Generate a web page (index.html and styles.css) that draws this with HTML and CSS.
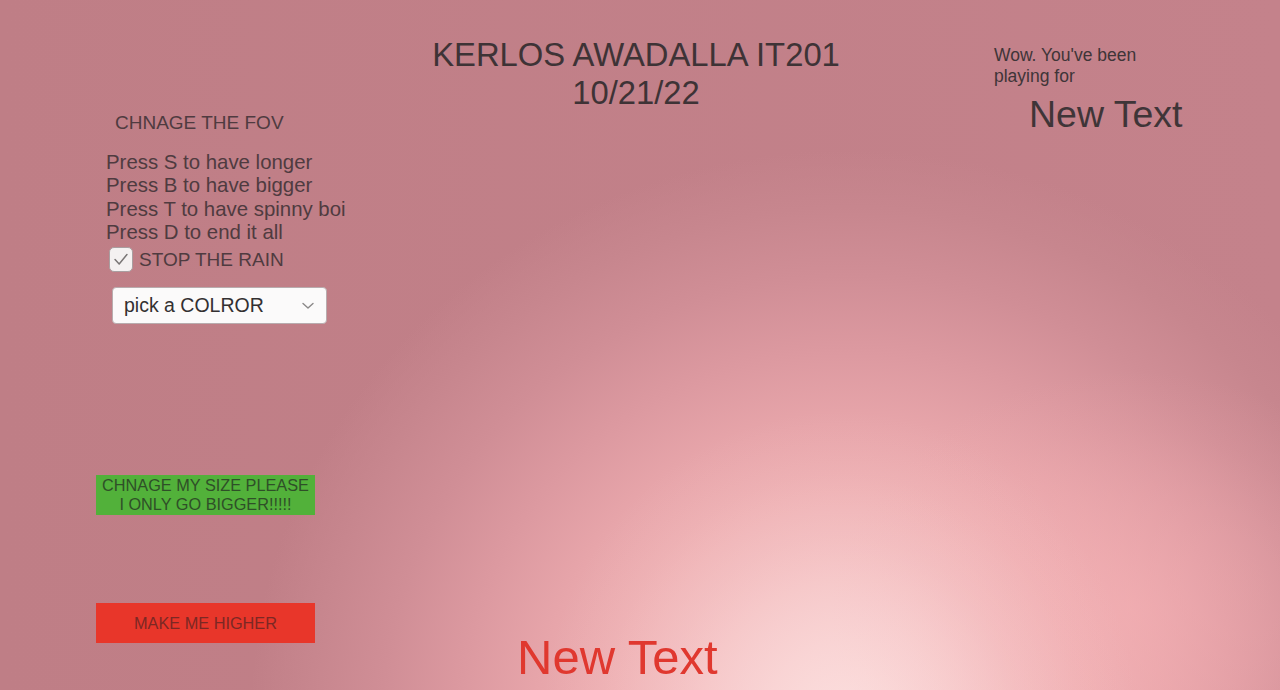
FILE: index.html
```html
<!DOCTYPE html>
<html lang="en">
<head>
<meta charset="utf-8">
<title>KERLOS AWADALLA IT201</title>
<link rel="stylesheet" href="styles.css">
</head>
<body>
<div class="screen">
  <aside class="left">
    <div class="fov">CHNAGE THE FOV</div>
    <div class="keys">
      <div>Press S to have longer</div>
      <div>Press B to have bigger</div>
      <div>Press T to have spinny boi</div>
      <div>Press D to end it all</div>
    </div>
    <label class="toggle">
      <span class="box">
        <svg width="24" height="25" viewBox="0 0 24 25"><polyline points="5.5,12.5 10,17.5 18.5,7" fill="none" stroke="#7a7676" stroke-width="1.6" stroke-linecap="round" stroke-linejoin="round"/></svg>
      </span>
      <span class="toggle-label">STOP THE RAIN</span>
    </label>
    <div class="dropdown">
      <span>pick a COLROR</span>
      <svg class="chev" width="12" height="8" viewBox="0 0 12 8"><polyline points="1,1.5 6,6 11,1.5" fill="none" stroke="#8a8888" stroke-width="1.4" stroke-linecap="round" stroke-linejoin="round"/></svg>
    </div>
    <button class="btn green">CHNAGE MY SIZE PLEASE<br>I ONLY GO BIGGER!!!!!</button>
    <button class="btn red">MAKE ME HIGHER</button>
  </aside>
  <main class="center">
    <h1 class="title">KERLOS AWADALLA IT201<br>10/21/22</h1>
    <div class="bigred">New Text</div>
  </main>
  <aside class="right">
    <p class="wow">Wow. You've been<br>playing for</p>
    <div class="timer">New Text</div>
  </aside>
</div>
</body>
</html>
```

FILE: styles.css
```css
html, body {
  margin: 0;
  padding: 0;
}
body {
  width: 1280px;
  height: 690px;
  overflow: hidden;
  font-family: "Liberation Sans", Arial, sans-serif;
  background-color: #c1808a;
  background-image:
    radial-gradient(ellipse 300px 320px at 840px 730px, rgba(252,224,223,0.8) 0%, rgba(251,218,218,0.55) 30%, rgba(249,210,211,0.28) 60%, rgba(248,206,207,0.1) 80%, rgba(248,206,207,0) 100%),
    radial-gradient(ellipse 300px 240px at 1130px 610px, rgba(245,176,180,0.6) 0%, rgba(243,174,178,0.35) 45%, rgba(242,172,176,0.12) 75%, rgba(240,170,175,0) 100%),
    radial-gradient(ellipse 600px 570px at 850px 720px, #f9d6d6 0%, #f6cacb 14%, #f2bbbd 28%, #eeb0b3 40%, #e7a5aa 52%, #dc99a0 65%, #d08e96 78%, #c7868e 90%, rgba(193,128,138,0) 100%),
    linear-gradient(90deg, #bf7e86 0%, #c4828b 100%);
}
.screen {
  display: grid;
  grid-template-columns: 286px 708px 286px;
  height: 690px;
}
.left {
  display: flex;
  flex-direction: column;
  align-items: flex-start;
  padding-top: 112px;
  white-space: nowrap;
  color: #4f3b40;
}
.fov {
  font-size: 19px;
  line-height: 22px;
  margin-left: 115px;
}
.keys {
  font-size: 20.4px;
  line-height: 23.3px;
  margin-top: 17px;
  margin-left: 106px;
}
.toggle {
  display: flex;
  align-items: center;
  margin-top: 3px;
  margin-left: 109px;
  height: 25px;
}
.box {
  width: 24px;
  height: 25px;
  box-sizing: border-box;
  background: #f4f1f1;
  border: 1px solid #a99ea0;
  border-radius: 5px;
  display: flex;
  align-items: center;
  justify-content: center;
}
.box svg {
  display: block;
}
.toggle-label {
  font-size: 19px;
  margin-left: 6px;
}
.dropdown {
  margin-top: 15px;
  margin-left: 112px;
  width: 215px;
  height: 37px;
  box-sizing: border-box;
  background: #fbfafa;
  border: 1px solid #b8acae;
  border-radius: 4px;
  display: flex;
  align-items: center;
  justify-content: space-between;
  padding: 0 12px 0 11px;
  font-size: 19.5px;
  color: #333031;
}
.chev {
  display: block;
}
.btn {
  border: none;
  margin: 0;
  padding: 0;
  width: 219px;
  height: 40px;
  margin-left: 96px;
  font-family: "Liberation Sans", Arial, sans-serif;
  font-size: 16.3px;
  text-align: center;
}
.green {
  margin-top: 151px;
  background: #52b13a;
  color: #2f4f28;
  line-height: 19px;
}
.red {
  margin-top: 88px;
  background: #e8362a;
  color: #7c2824;
}
.center {
  display: flex;
  flex-direction: column;
  padding-top: 36px;
}
.title {
  margin: 0;
  font-weight: normal;
  font-size: 32.8px;
  line-height: 38px;
  text-align: center;
  padding-right: 8px;
  color: #3e3336;
}
.bigred {
  margin-top: auto;
  margin-left: 231px;
  padding-bottom: 5px;
  font-size: 49px;
  line-height: 56px;
  color: #e0382f;
  white-space: nowrap;
}
.right {
  padding-top: 45px;
  color: #3f3538;
}
.wow {
  margin: 0;
  font-size: 17.5px;
  line-height: 21px;
}
.timer {
  margin-top: 7px;
  margin-left: 35px;
  font-size: 37.5px;
  line-height: 40px;
}
```
